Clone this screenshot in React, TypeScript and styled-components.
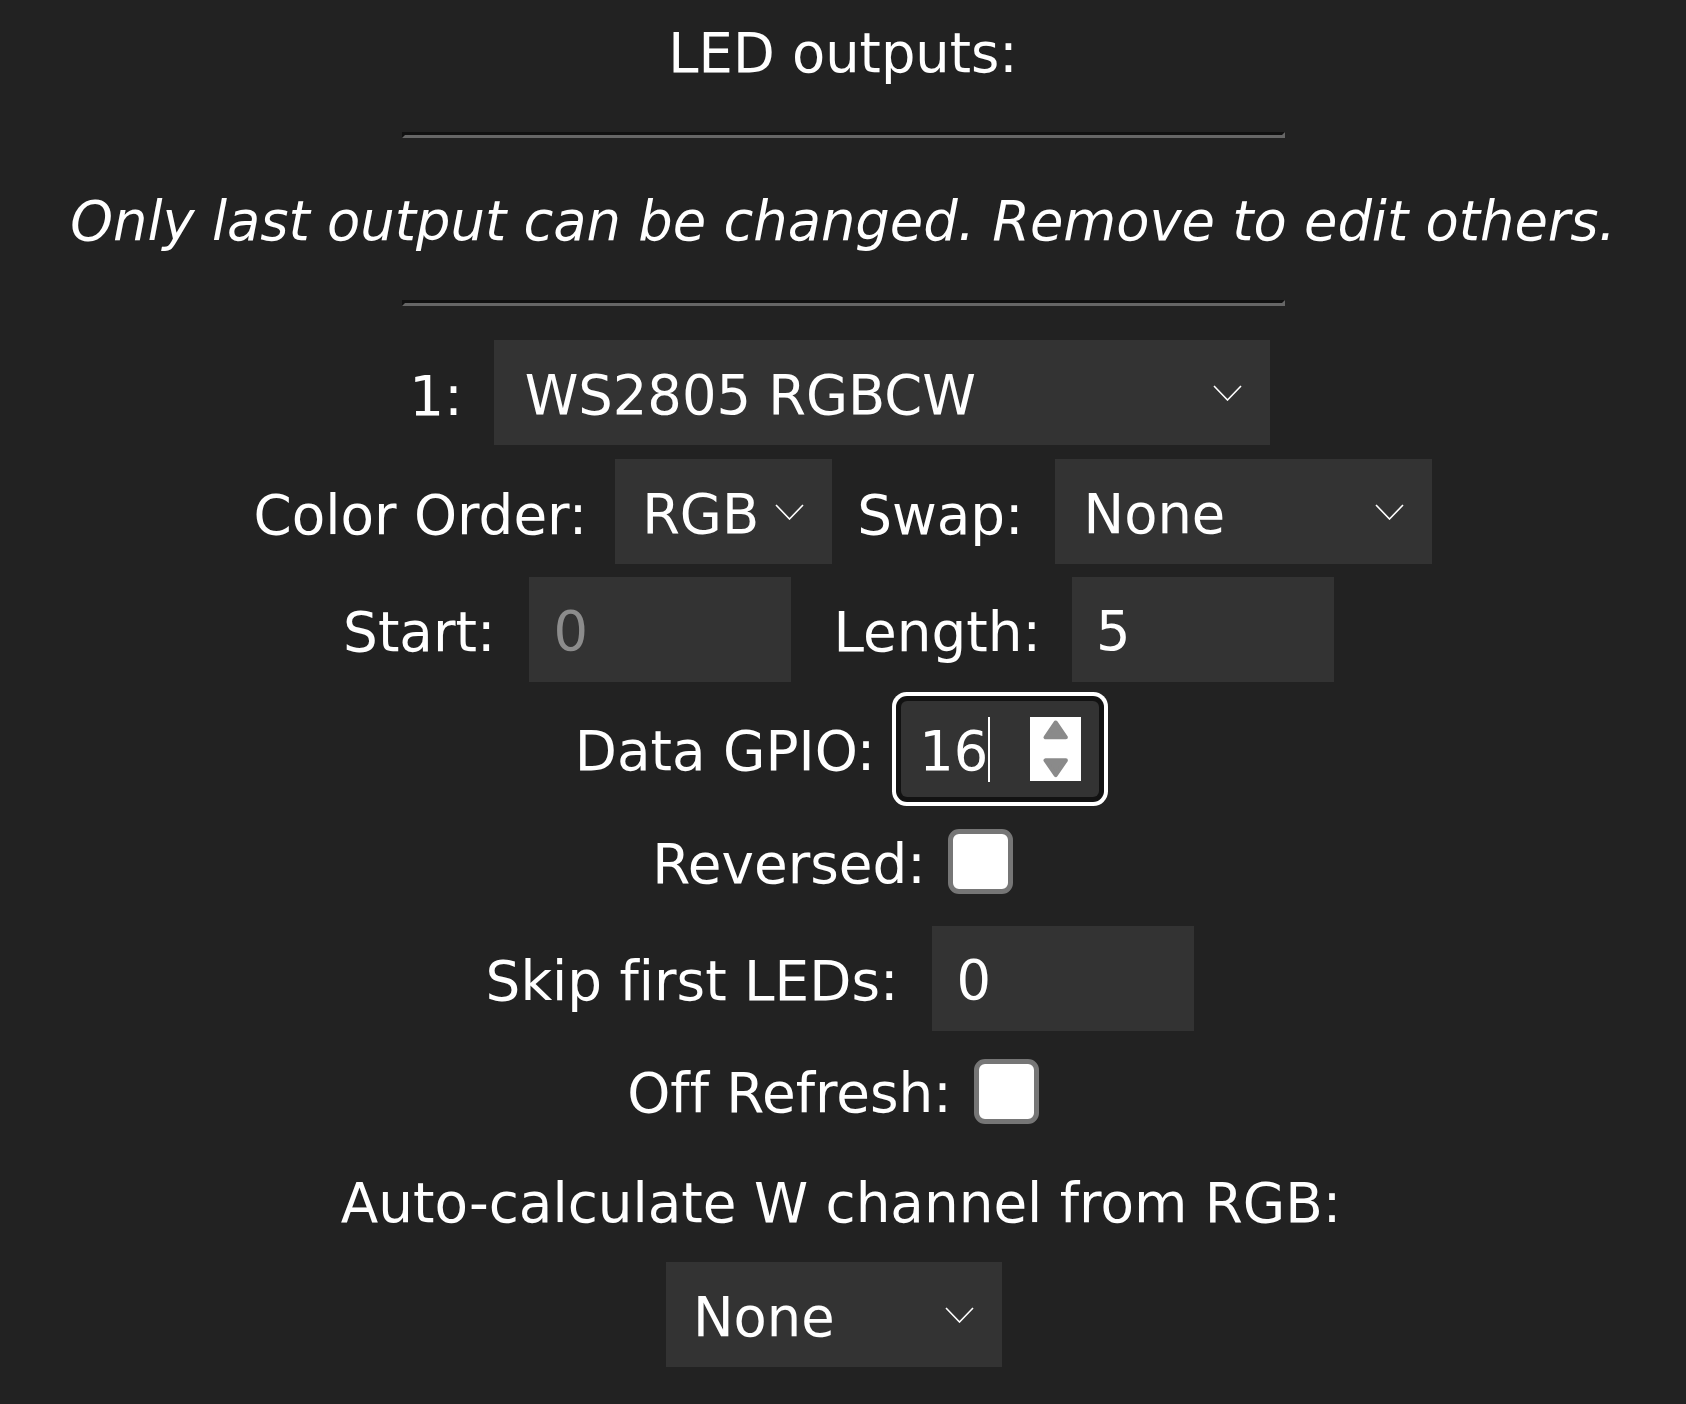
import React from "react";
import styled, { createGlobalStyle } from "styled-components";

const GlobalStyle = createGlobalStyle`
  html, body {
    margin: 0;
    padding: 0;
    background: #222222;
  }
  body {
    font-family: "DejaVu Sans", Verdana, sans-serif;
    color: #ffffff;
    font-variant-ligatures: none;
    font-feature-settings: "liga" 0, "clig" 0;
  }
`;

const FS = "54.3px";
const LABEL_FS = "54.8px";

const Page = styled.div`
  display: flex;
  flex-direction: column;
  align-items: center;
  padding-top: 22px;
  min-height: 100vh;
  box-sizing: border-box;
  background: #222222;
`;

const Heading = styled.div<{ $top?: number; $italic?: boolean }>`
  font-size: ${FS};
  line-height: 64px;
  height: 64px;
  margin-top: ${(p) => p.$top ?? 0}px;
  font-style: ${(p) => (p.$italic ? "italic" : "normal")};
  white-space: nowrap;
  text-align: center;
`;

const Rule = styled.div<{ $top: number }>`
  width: 877px;
  height: 0;
  margin-top: ${(p) => p.$top}px;
  border-style: solid;
  border-width: 3px;
  border-color: #111111 #666666 #666666 #111111;
`;

const Row = styled.div<{ $top: number; $trail?: number }>`
  display: flex;
  justify-content: center;
  align-items: flex-start;
  align-self: stretch;
  box-sizing: border-box;
  margin-top: ${(p) => p.$top}px;
  padding-right: ${(p) => p.$trail ?? 0}px;
`;

const Label = styled.span<{ $top: number; $gap?: number }>`
  display: block;
  font-size: ${LABEL_FS};
  line-height: 64px;
  white-space: nowrap;
  margin-top: ${(p) => p.$top}px;
  margin-left: ${(p) => p.$gap ?? 0}px;
`;

const SelectBox = styled.div<{ $w: number; $gap?: number; $pad: number }>`
  display: flex;
  align-items: flex-start;
  justify-content: space-between;
  box-sizing: border-box;
  width: ${(p) => p.$w}px;
  height: 105px;
  margin-left: ${(p) => p.$gap ?? 0}px;
  padding-left: ${(p) => p.$pad}px;
  padding-right: 28px;
  background: #333333;
`;

const SelectText = styled.span`
  display: block;
  font-size: ${FS};
  line-height: 64px;
  margin-top: 24px;
  white-space: nowrap;
`;

const Chevron = styled.svg`
  display: block;
  flex: none;
  margin-top: 45px;
`;

const TextInput = styled.div<{ $w: number; $gap: number; $muted?: boolean }>`
  box-sizing: border-box;
  width: ${(p) => p.$w}px;
  height: 105px;
  margin-left: ${(p) => p.$gap}px;
  padding: 23px 0 0 24px;
  background: #333333;
  font-size: ${FS};
  line-height: 64px;
  color: ${(p) => (p.$muted ? "#8c8c8c" : "#ffffff")};
`;

const NumberField = styled.div<{ $gap: number }>`
  display: flex;
  align-items: flex-start;
  box-sizing: border-box;
  width: 198px;
  height: 96px;
  margin-left: ${(p) => p.$gap}px;
  padding-left: 18px;
  background: #333333;
  border-radius: 6px;
  box-shadow: 0 0 0 5px #121212, 0 0 0 9px #ffffff;
`;

const NumberValue = styled.span`
  display: block;
  font-size: ${FS};
  line-height: 64px;
  margin-top: 19px;
`;

const Caret = styled.span`
  display: block;
  width: 2px;
  height: 65px;
  margin-top: 16px;
  background: #ffffff;
`;

const Spinner = styled.svg`
  display: block;
  flex: none;
  margin-left: auto;
  margin-right: 18px;
  margin-top: 16px;
`;

const CheckBox = styled.div<{ $gap: number }>`
  box-sizing: border-box;
  width: 65px;
  height: 65px;
  margin-left: ${(p) => p.$gap}px;
  border: 5px solid #767676;
  border-radius: 11px;
  background: #ffffff;
`;

const ChevronIcon = () => (
  <Chevron width="29" height="16" viewBox="0 0 29 16">
    <polyline
      points="1,1 14.5,15 28,1"
      fill="none"
      stroke="#ffffff"
      strokeWidth="1.6"
    />
  </Chevron>
);

const Select = ({
  value,
  w,
  gap,
  pad,
}: {
  value: string;
  w: number;
  gap?: number;
  pad: number;
}) => (
  <SelectBox $w={w} $gap={gap} $pad={pad}>
    <SelectText>{value}</SelectText>
    <ChevronIcon />
  </SelectBox>
);

export default function App() {
  return (
    <>
      <GlobalStyle />
      <Page>
        <Heading>LED outputs:</Heading>
        <Rule $top={46} />
        <Heading $top={52} $italic>
          Only last output can be changed. Remove to edit others.
        </Heading>
        <Rule $top={46} />

        <Row $top={34} $trail={7}>
          <Label $top={24}>1:</Label>
          <Select value="WS2805 RGBCW" w={776} gap={31} pad={31} />
        </Row>

        <Row $top={14} $trail={1}>
          <Label $top={24}>Color Order:</Label>
          <Select value="RGB" w={217} gap={28} pad={27} />
          <Label $top={24} $gap={25}>
            Swap:
          </Label>
          <Select value="None" w={377} gap={31} pad={29} />
        </Row>

        <Row $top={13} $trail={9}>
          <Label $top={23}>Start:</Label>
          <TextInput $w={262} $gap={34} $muted>
            0
          </TextInput>
          <Label $top={23} $gap={42}>
            Length:
          </Label>
          <TextInput $w={262} $gap={31}>
            5
          </TextInput>
        </Row>

        <Row $top={19} $trail={12}>
          <Label $top={18}>Data GPIO:</Label>
          <NumberField $gap={26}>
            <NumberValue>16</NumberValue>
            <Caret />
            <Spinner width="51" height="64" viewBox="0 0 51 64">
              <rect x="0" y="0" width="51" height="64" fill="#ffffff" />
              <polygon
                points="25.7,5.5 15.5,20.3 35.9,20.3"
                fill="#8a8a8a"
                stroke="#8a8a8a"
                strokeWidth="4"
                strokeLinejoin="round"
              />
              <polygon
                points="15.5,43.3 35.9,43.3 25.7,58.2"
                fill="#8a8a8a"
                stroke="#8a8a8a"
                strokeWidth="4"
                strokeLinejoin="round"
              />
            </Spinner>
          </NumberField>
        </Row>

        <Row $top={32} $trail={21}>
          <Label $top={3}>Reversed:</Label>
          <CheckBox $gap={22} />
        </Row>

        <Row $top={30} $trail={6}>
          <Label $top={23}>Skip first LEDs:</Label>
          <TextInput $w={262} $gap={34}>
            0
          </TextInput>
        </Row>

        <Row $top={28} $trail={20}>
          <Label $top={2}>Off Refresh:</Label>
          <CheckBox $gap={22} />
        </Row>

        <Row $top={46} $trail={4}>
          <Label $top={0}>Auto-calculate W channel from RGB:</Label>
        </Row>

        <Row $top={27} $trail={18}>
          <Select value="None" w={336} pad={27} />
        </Row>
      </Page>
    </>
  );
}
